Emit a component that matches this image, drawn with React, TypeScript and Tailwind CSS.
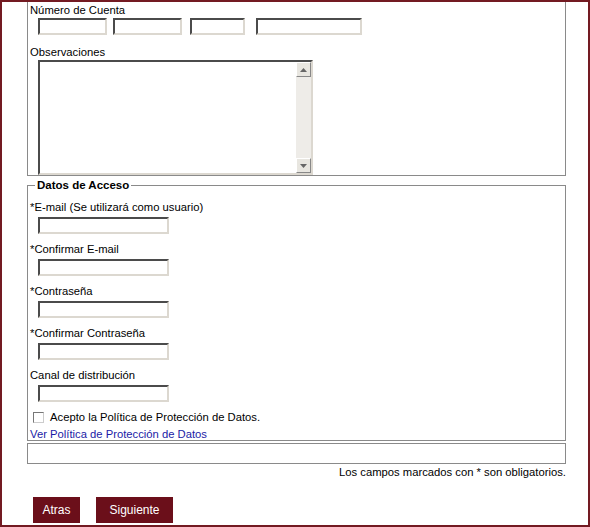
import React from 'react';

const field =
  'block h-[17px] bg-white border-2 border-t-[#4b4b4b] border-l-[#4b4b4b] border-r-[#dcd8d0] border-b-[#dcd8d0]';

function Field({ label }: { label: string }) {
  return (
    <div>
      <div className="leading-[14px]">{label}</div>
      <div className={`${field} ml-[8px] mt-[3px] w-[131px]`} />
    </div>
  );
}

function ScrollArrow({ up }: { up?: boolean }) {
  return (
    <div className="flex h-[15px] w-[15px] items-center justify-center border border-t-[#fff] border-l-[#fff] border-r-[#888] border-b-[#888] bg-[#e8e6e0]">
      <svg width="7" height="4" viewBox="0 0 7 4">
        <path d={up ? 'M0 4 L3.5 0 L7 4 Z' : 'M0 0 L3.5 4 L7 0 Z'} fill="#666" />
      </svg>
    </div>
  );
}

export default function App() {
  return (
    <div
      className="h-[527px] w-[590px] overflow-hidden border-2 border-[#731a22] bg-white text-[11.25px] text-black"
      style={{ fontFamily: '"Liberation Sans", Arial, sans-serif' }}
    >
      <div className="ml-[25px] mr-[22px]">
        {/* bank details block, its top edge scrolled out of view */}
        <div className="h-[174px] border-x border-b border-[#8a8a8a] pl-[2px] pt-[1px]">
          <div className="leading-[14px]">Número de Cuenta</div>
          <div className="ml-[8px] mt-[1px] flex">
            <div className={`${field} w-[69px]`} />
            <div className={`${field} ml-[6px] w-[69px]`} />
            <div className={`${field} ml-[8px] w-[55px]`} />
            <div className={`${field} ml-[11px] w-[106px]`} />
          </div>
          <div className="mt-[10px] leading-[14px]">Observaciones</div>
          <div className="ml-[8px] mt-[1px] flex h-[115px] w-[275px] border-2 border-t-[#4b4b4b] border-l-[#4b4b4b] border-r-[#dcd8d0] border-b-[#dcd8d0] bg-white">
            <div className="flex-1" />
            <div className="flex w-[15px] flex-col justify-between bg-[#eeece8]">
              <ScrollArrow up />
              <ScrollArrow />
            </div>
          </div>
        </div>

        <fieldset className="mt-[2px] h-[263px] border border-[#8a8a8a] pl-[2px]">
          <legend className="ml-[5px] px-[2px] text-[11.5px] font-bold leading-[14px]">Datos de Acceso</legend>
          <div className="mt-[8px] flex flex-col gap-[8px]">
            <Field label="*E-mail (Se utilizará como usuario)" />
            <Field label="*Confirmar E-mail" />
            <Field label="*Contraseña" />
            <Field label="*Confirmar Contraseña" />
            <Field label="Canal de distribución" />
          </div>
          <div className="mt-[8px] flex items-center">
            <div className="ml-[3px] h-[11px] w-[11px] border border-t-[#777] border-l-[#777] border-r-[#ccc] border-b-[#ccc] bg-white" />
            <span className="ml-[6px] leading-[14px]">Acepto la Política de Protección de Datos.</span>
          </div>
          <a href="#" className="mt-[3px] block leading-[14px] text-[#1a1aa6]">
            Ver Política de Protección de Datos
          </a>
        </fieldset>

        <div className="mt-[2px] h-[21px] border border-[#8a8a8a]" />
        <div className="mt-[1px] text-right leading-[14px]">Los campos marcados con * son obligatorios.</div>

        <div className="mt-[18px] flex gap-[16px] pl-[6px]">
          <button className="h-[26px] w-[47px] bg-[#6b0f1a] text-[12px] text-white">Atras</button>
          <button className="h-[26px] w-[77px] bg-[#6b0f1a] text-[12px] text-white">Siguiente</button>
        </div>
      </div>
    </div>
  );
}
